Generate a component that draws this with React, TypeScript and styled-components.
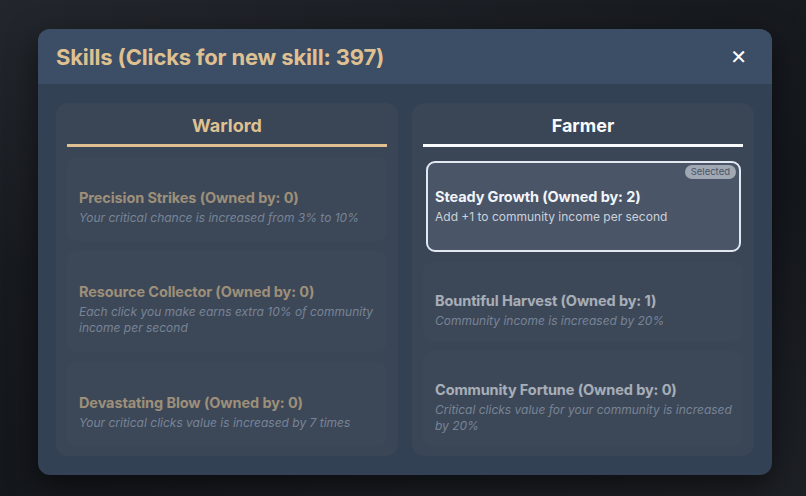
import React from "react";
import styled, { createGlobalStyle } from "styled-components";

const Global = createGlobalStyle`
  html, body { margin: 0; padding: 0; }
  body {
    font-family: Inter, "Noto Sans", "Liberation Sans", sans-serif;
    background: linear-gradient(160deg, #23272d 0%, #171a1f 35%, #14171c 60%, #1d2025 100%);
    min-height: 100vh;
  }
  * { box-sizing: border-box; }
`;

const Page = styled.div`
  height: 496px;
  display: flex;
  align-items: center;
  justify-content: center;
  padding-left: 4px;
  padding-top: 8px;
`;

const Modal = styled.div`
  width: 734px;
  height: 446px;
  border-radius: 12px;
  background: #334155;
  overflow: hidden;
  display: flex;
  flex-direction: column;
  box-shadow: 0 10px 30px rgba(0, 0, 0, 0.5);
`;

const Header = styled.div`
  height: 55px;
  flex: 0 0 auto;
  background: #3c4d66;
  display: flex;
  align-items: center;
  justify-content: space-between;
  padding: 0 25px 0 18px;
`;

const Title = styled.h2`
  margin: 0;
  font-size: 22px;
  font-weight: 700;
  color: #dfc191;
  letter-spacing: -0.15px;
`;

const Close = styled.button`
  background: none;
  border: none;
  padding: 0;
  color: #ffffff;
  font-family: "DejaVu Sans", sans-serif;
  font-size: 20px;
  font-weight: 700;
  line-height: 1;
  cursor: pointer;
`;

const Body = styled.div`
  flex: 1;
  display: grid;
  grid-template-columns: 1fr 1fr;
  gap: 14px;
  padding: 19px 18px 19px 18px;
  min-height: 0;
`;

const Column = styled.div`
  background: #3a4556;
  border-radius: 12px;
  padding: 11px 11px 10px;
  display: flex;
  flex-direction: column;
`;

const ColumnTitle = styled.h3<{ $accent: string }>`
  margin: 0 0 10px;
  padding-bottom: 7px;
  border-bottom: 3px solid ${(p) => p.$accent};
  text-align: center;
  font-size: 18px;
  line-height: 23px;
  font-weight: 700;
  color: ${(p) => p.$accent};
`;

const CardList = styled.div`
  flex: 1;
  display: flex;
  flex-direction: column;
  gap: 10px;
`;

const Card = styled.div<{ $selected?: boolean; $gold?: boolean }>`
  position: relative;
  flex: 1 1 auto;
  display: flex;
  flex-direction: column;
  justify-content: center;
  border-radius: 9px;
  margin-top: ${(p) => (p.$selected ? "4px" : "0")};
  margin-left: ${(p) => (p.$selected ? "3px" : "0")};
  margin-right: ${(p) => (p.$selected ? "2px" : "0")};
  padding: ${(p) => (p.$selected ? "21px 7px 23px" : "26px 6px 10px 12px")};
  background: ${(p) => (p.$selected ? "#4a5568" : "rgba(255,255,255,0.025)")};
  border: ${(p) => (p.$selected ? "2px solid #e2e8f0" : "none")};
  color: ${(p) => (p.$gold ? "#dfc191" : "#f1f5f9")};
  opacity: ${(p) => (p.$selected ? 1 : 0.6)};
`;

const CardTitle = styled.div`
  font-size: 14.5px;
  line-height: 20px;
  font-weight: 700;
  letter-spacing: -0.1px;
`;

const CardDesc = styled.div<{ $selected?: boolean }>`
  margin-top: 2px;
  font-size: 12px;
  line-height: 16px;
  font-style: ${(p) => (p.$selected ? "normal" : "italic")};
  color: ${(p) => (p.$selected ? "#cbd2db" : "#a0aec0")};
`;

const Badge = styled.span`
  position: absolute;
  top: 2px;
  right: 3px;
  background: #a0a8b4;
  color: #4a5568;
  font-size: 9.5px;
  line-height: 14px;
  padding: 0 6px;
  border-radius: 8px;
`;

type Skill = { name: string; owned: number; desc: string; selected?: boolean };

const warlord: Skill[] = [
  { name: "Precision Strikes", owned: 0, desc: "Your critical chance is increased from 3% to 10%" },
  { name: "Resource Collector", owned: 0, desc: "Each click you make earns extra 10% of community income per second" },
  { name: "Devastating Blow", owned: 0, desc: "Your critical clicks value is increased by 7 times" },
];

const farmer: Skill[] = [
  { name: "Steady Growth", owned: 2, desc: "Add +1 to community income per second", selected: true },
  { name: "Bountiful Harvest", owned: 1, desc: "Community income is increased by 20%" },
  { name: "Community Fortune", owned: 0, desc: "Critical clicks value for your community is increased by 20%" },
];

function SkillColumn({ title, accent, gold, skills }: { title: string; accent: string; gold?: boolean; skills: Skill[] }) {
  return (
    <Column>
      <ColumnTitle $accent={accent}>{title}</ColumnTitle>
      <CardList>
        {skills.map((s) => (
          <Card key={s.name} $selected={s.selected} $gold={gold}>
            {s.selected && <Badge>Selected</Badge>}
            <CardTitle>
              {s.name} (Owned by: {s.owned})
            </CardTitle>
            <CardDesc $selected={s.selected}>{s.desc}</CardDesc>
          </Card>
        ))}
      </CardList>
    </Column>
  );
}

export default function App() {
  return (
    <>
      <Global />
      <Page>
        <Modal>
          <Header>
            <Title>Skills (Clicks for new skill: 397)</Title>
            <Close aria-label="close">✕</Close>
          </Header>
          <Body>
            <SkillColumn title="Warlord" accent="#dfc191" gold skills={warlord} />
            <SkillColumn title="Farmer" accent="#f8fafc" skills={farmer} />
          </Body>
        </Modal>
      </Page>
    </>
  );
}
